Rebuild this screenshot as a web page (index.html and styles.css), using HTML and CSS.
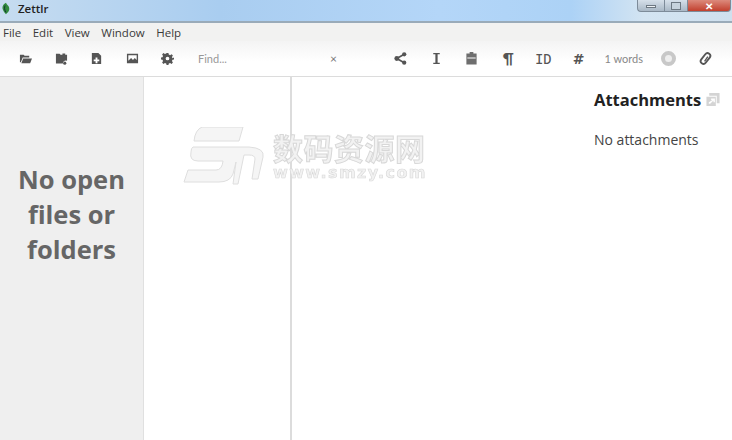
FILE: index.html
```html
<!DOCTYPE html>
<html lang="en">

<head>
    <meta charset="UTF-8">
    <title>Zettlr</title>
    <link rel="stylesheet" href="styles.css">
</head>

<body>
    <!-- Window title bar -->
    <div class="titlebar">
        <div class="title-left">
            <svg class="app-logo" width="10" height="13" viewBox="0 0 10 15">
                <path d="M5 1 C1 3 0 7 2 10 C3 12 4 13 5 14 C8 12 10 9 8 5 C7 4 6 3 5 1Z" fill="#2f8a3c"/>
                <path d="M4 4 C3 6 3 9 5 12" stroke="#123" stroke-width="1" fill="none"/>
            </svg>
            <span class="app-name">Zettlr</span>
        </div>
        <div class="window-buttons">
            <div class="win-btn win-min"><span></span></div>
            <div class="win-btn win-max"><span></span></div>
            <div class="win-btn win-close">&#x2715;</div>
        </div>
    </div>

    <!-- Menu -->
    <div class="menubar">
        <a>File</a>
        <a>Edit</a>
        <a>View</a>
        <a>Window</a>
        <a>Help</a>
    </div>

    <!-- Toolbar -->
    <div class="toolbar">
        <div class="tool-group">
            <svg class="icon" viewBox="0 0 14 14"><path d="M1 3h4l1 1h5v2H4L2 11H1zM4.500 7H14l-2 5H2.500z"/></svg>
            <svg class="icon" viewBox="0 0 14 14"><path d="M1 2h4l1 1h2V1.500h3V3h2v6.500a3 3 0 0 0-4.500 3H1z"/><circle cx="10.500" cy="12" r="1.700"/></svg>
            <svg class="icon" viewBox="0 0 14 14"><path d="M2 1h7l3 3v9H2zM6 6v2H4v2h2v2h2v-2h2V8H8V6z" fill-rule="evenodd"/></svg>
            <svg class="icon" viewBox="0 0 14 14"><path d="M1 2h12v10H1zM2.500 3.500v6l3-3 2 2 2-2 2 2v-5z" fill-rule="evenodd"/></svg>
            <svg class="icon" viewBox="0 0 14 14"><path d="M6 1h2l.4 1.800 1.400.6 1.600-1 1.400 1.400-1 1.600.6 1.400L14 6v2l-1.600.4-.6 1.400 1 1.600-1.400 1.400-1.600-1-1.400.6L8 14H6l-.4-1.600-1.400-.6-1.600 1L1.200 11.400l1-1.600-.6-1.400L0 8V6l1.600-.4.6-1.400-1-1.600L2.600 1.200l1.600 1 1.400-.6zM7 5a2 2 0 1 0 0 4 2 2 0 0 0 0-4z" fill-rule="evenodd"/></svg>
        </div>
        <div class="search">
            <span class="search-text">Find...</span>
            <span class="search-clear">&#x00D7;</span>
        </div>
        <div class="tool-group tool-right">
            <svg class="icon" viewBox="0 0 14 14"><circle cx="11" cy="2.500" r="2.300"/><circle cx="11" cy="11.500" r="2.300"/><circle cx="3" cy="7" r="2.600"/><path d="M3 7l8-4.500M3 7l8 4.500" stroke="#555" stroke-width="1.800"/></svg>
            <svg class="icon" viewBox="0 0 14 14"><path d="M3.500 1h7v1.500H8.200v9h2.300V13h-7v-1.500h2.300v-9H3.500z"/></svg>
            <svg class="icon icon-light" viewBox="0 0 14 14"><path d="M5 0h4v1.500h3.500v12h-11v-12H5zM2.500 6v1h9V6z" fill-rule="evenodd"/></svg>
            <span class="glyph pilcrow">&para;</span>
            <span class="glyph id-tag">ID</span>
            <span class="glyph hash">#</span>
            <span class="word-count">1 words</span>
            <div class="pomodoro"></div>
            <svg class="icon" viewBox="0 0 14 14"><rect x="4" y="0.500" width="6" height="13" rx="3" transform="rotate(38 7 7)" fill="none" stroke="#555" stroke-width="2"/><path d="M6 10l3.500-5" stroke="#555" stroke-width="1.500"/></svg>
        </div>
    </div>

    <div class="panes">
        <div class="sidebar">
            <div class="no-folders">No open files or folders</div>
        </div>
        <div class="file-list"></div>
        <div class="editor">
            <div class="attachments">
                <div class="attach-head">
                    <span class="attach-title">Attachments</span>
                    <svg class="attach-open" width="16" height="15" viewBox="0 0 16 16"><path d="M4 1h11v11h-3V4H4zM1 5h10v10H1zM3.500 12.500h1.500L8.500 9v2H10V7H6v1.500h1.500L3.500 11z" fill-rule="evenodd"/></svg>
                </div>
                <p class="no-attach">No attachments</p>
            </div>
        </div>

        <!-- Site watermark lies over the panes -->
        <div class="watermark">
            <svg class="wm-logo" width="82" height="60" viewBox="-2 0 82 60">
                <path d="M17 0H58L54 14H9Q10 3 17 0Z" fill="#f5f5f5" stroke="#dedede"/>
                <path d="M8 20H64Q80 21 78 30L73 52H67L70 32Q70 28 64 28H59L53 57H48L51 35L48 47Q45 55 34 55H-1L3 43H31Q37 43 38 34H13Q4 34 6 25Q6 21 8 20Z" fill="#f5f5f5" stroke="#dedede"/>
            </svg>
            <div class="wm-text">
                <div class="wm-cn">数码资源网</div>
                <div class="wm-url">www.smzy.com</div>
            </div>
        </div>
    </div>
</body>

</html>
```
FILE: styles.css
```css
* {
    box-sizing: border-box;
}

html, body {
    height: 100%;
}

body {
    margin: 0;
    display: flex;
    flex-direction: column;
    overflow: hidden;
    background-color: #fff;
    font-family: "Open Sans", sans-serif;
    color: #444;
}

.titlebar {
    height: 23px;
    display: flex;
    justify-content: space-between;
    flex-shrink: 0;
    background: linear-gradient(90deg, #c6dcf0 0%, #a9cdf0 30%, #b4d6f8 60%, #acd2f6 78%, #d3e4f2 88%, #cfe0ee 100%);
    border-bottom: 2px solid #9aabb9;
}

.title-left {
    display: flex;
    align-items: center;
    padding: 0 0 4px 1px;
}

.app-logo {
    margin-right: 7px;
}

.app-name {
    font-size: 11.5px;
    font-weight: 600;
    color: #222;
}

.window-buttons {
    display: flex;
    height: 12px;
    margin-right: 1px;
}

.win-btn {
    display: flex;
    align-items: center;
    justify-content: center;
    border: 1px solid #7d8b99;
    border-top: none;
    background: linear-gradient(#d6e0ea, #a9b8c6);
}

.win-min {
    width: 27px;
    border-radius: 0 0 0 4px;
    border-right: none;
}

.win-min span {
    width: 10px;
    height: 3px;
    margin-top: 2px;
    background-color: #eef2f5;
    border: 1px solid #6d7882;
}

.win-max {
    width: 24px;
}

.win-max span {
    width: 10px;
    height: 8px;
    background-color: #c6d2dc;
    border: 1.5px solid #6d7882;
}

.win-close {
    width: 43px;
    border-radius: 0 0 4px 0;
    border-left: none;
    background: linear-gradient(#dc8a7c, #c2402e);
    color: #fff;
    font-size: 10px;
    font-weight: bold;
}

.menubar {
    height: 18px;
    display: flex;
    align-items: center;
    flex-shrink: 0;
    background-color: #f2f2f1;
    padding-left: 3px;
    gap: 11.5px;
    font-size: 11.5px;
    color: #3a3a3a;
}

.toolbar {
    height: 36px;
    display: flex;
    align-items: center;
    flex-shrink: 0;
    background: linear-gradient(#f4f4f4, #ffffff 60%);
    border-bottom: 1px solid #dcdcdc;
    padding: 0 20px 0 19px;
    font-family: Lato, sans-serif;
}

.tool-group {
    display: flex;
    align-items: center;
    gap: 22.5px;
}

.icon {
    width: 13px;
    height: 13px;
    fill: #555;
    flex-shrink: 0;
    filter: blur(.3px);
}

.icon-light {
    fill: #6e6e6e;
}

.search {
    display: flex;
    justify-content: space-between;
    align-items: center;
    width: 139px;
    margin-left: 24px;
    font-size: 11px;
    color: #999;
}

.search-clear {
    font-size: 12px;
    color: #777;
}

.tool-right {
    margin-left: auto;
    gap: 0;
}

.tool-right .icon:nth-child(1) {
    margin-right: 23px;
}

.tool-right .icon:nth-child(2) {
    margin-right: 22px;
}

.tool-right .icon:nth-child(3) {
    margin-right: 25px;
}

.glyph {
    color: #555;
    font-weight: bold;
}

.pilcrow {
    font-size: 15px;
    margin: -2px 21px 0 0;
}

.id-tag {
    font-size: 14px;
    font-weight: normal;
    margin-right: 21px;
    font-family: "DejaVu Sans Mono", monospace;
}

.hash {
    font-size: 14px;
    margin-right: 20px;
    font-family: "DejaVu Sans", sans-serif;
}

.word-count {
    font-size: 11px;
    color: #888;
    margin-right: 18px;
}

.pomodoro {
    width: 15px;
    height: 15px;
    border-radius: 50%;
    border: 4px solid #c8c8c8;
    background-color: #eee;
    margin-right: 23px;
    filter: blur(.4px);
}

.panes {
    flex: 1;
    display: flex;
    position: relative;
    min-height: 0;
}

.sidebar {
    width: 144px;
    background-color: #efefef;
    border-right: 1px solid #e0e0e0;
    display: flex;
    justify-content: center;
    padding-top: 85px;
}

.no-folders {
    width: 125px;
    text-align: center;
    font-size: 25.5px;
    font-weight: bold;
    line-height: 35px;
    color: #666;
}

.file-list {
    width: 148px;
    border-right: 2px solid #dcdcdc;
    background-color: #fff;
}

.editor {
    flex: 1;
    display: flex;
    justify-content: flex-end;
}

.attachments {
    width: 138px;
    padding-top: 11px;
}

.attach-head {
    display: flex;
    align-items: center;
    gap: 4px;
}

.attach-title {
    font-size: 16.5px;
    font-weight: bold;
    color: #222;
}

.attach-open {
    fill: #d4d4d4;
}

.no-attach {
    margin: 19px 0 0;
    font-size: 14px;
    color: #444;
}

.watermark {
    position: absolute;
    left: 183px;
    top: 50px;
    display: flex;
    gap: 8px;
    pointer-events: none;
    filter: blur(.5px);
}

.wm-text {
    padding-top: 3px;
    color: #f2f2f2;
    -webkit-text-stroke: 1px #d8d8d8;
}

.wm-cn {
    font-family: "Noto Sans CJK SC", sans-serif;
    font-size: 30px;
    font-weight: bold;
    line-height: 34px;
    letter-spacing: .5px;
}

.wm-url {
    font-family: "DejaVu Sans", sans-serif;
    font-size: 16px;
    font-weight: bold;
    line-height: 18px;
    letter-spacing: 1.4px;
    -webkit-text-stroke: .6px #d8d8d8;
}
```
